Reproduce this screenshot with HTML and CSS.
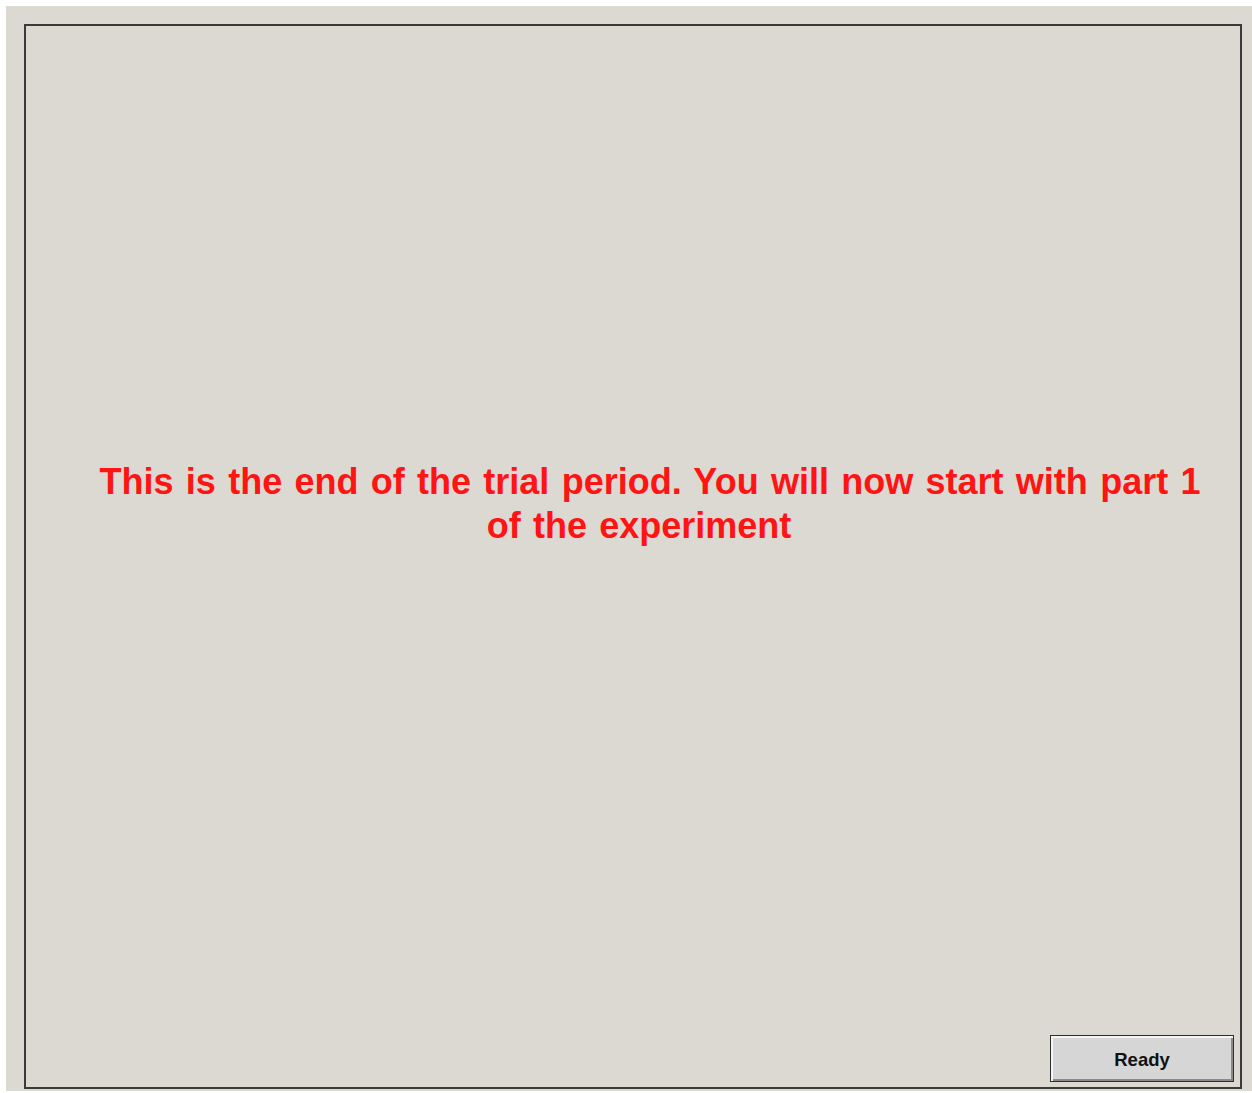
FILE: index.html
```html
<!DOCTYPE html>
<html lang="en">
<head>
<meta charset="utf-8">
<title>End of trial period</title>
<link rel="stylesheet" href="styles.css">
</head>
<body>
<div class="window">
  <div class="panel">
    <div class="message">
      <p class="message-text">This is the end of the trial period. You will now start with part 1<br>of the experiment</p>
    </div>
    <div class="actions">
      <button class="btn" type="button">Ready</button>
    </div>
  </div>
</div>
</body>
</html>
```
FILE: styles.css
```css
html, body {
  margin: 0;
  padding: 0;
  background: #ffffff;
}

.window {
  margin: 6px 0 0 6px;
  width: 1246px;
  height: 1085px;
  background: #dcd9d2;
  padding: 18px 0 0 18px;
  box-sizing: border-box;
}

.panel {
  width: 1218px;
  height: 1065px;
  box-sizing: border-box;
  border: 2px solid #3a3a3a;
  display: flex;
  flex-direction: column;
}

.message {
  flex: 1;
  padding-top: 434px;
  padding-left: 12px;
}

.message-text {
  margin: 0;
  text-align: center;
  text-indent: 22px;
  font-family: "Liberation Sans", Arial, sans-serif;
  font-weight: bold;
  font-size: 36px;
  line-height: 44px;
  word-spacing: 2.3px;
  color: #ff1414;
}

.actions {
  display: flex;
  justify-content: flex-end;
  padding: 0 6px 5px 0;
}

.btn {
  width: 184px;
  height: 47px;
  box-sizing: border-box;
  margin: 0;
  padding: 3px 0 0 0;
  background: #d6d6d6;
  border: 1px solid #2e2e2e;
  box-shadow: inset 2px 2px 0 #f4f4f4, inset -2px -2px 0 #8a8a8a;
  font-family: "Liberation Sans", Arial, sans-serif;
  font-weight: bold;
  font-size: 18.5px;
  color: #111111;
}
```
